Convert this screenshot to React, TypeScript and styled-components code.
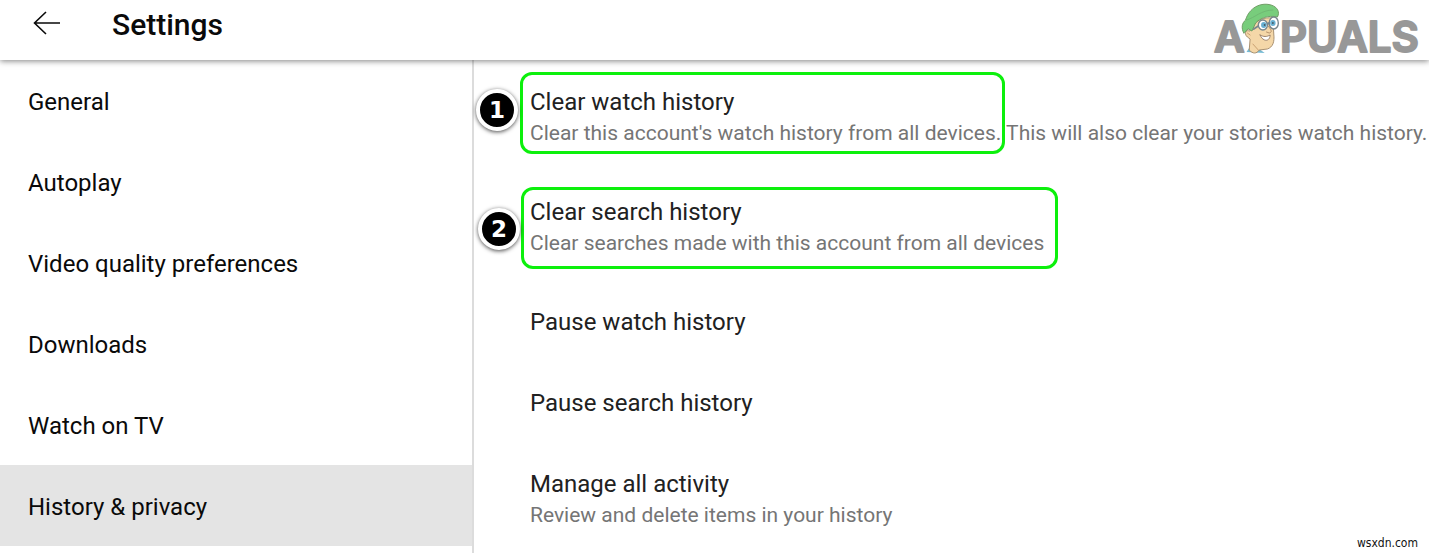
import React from "react";
import styled, { createGlobalStyle } from "styled-components";

const GlobalStyle = createGlobalStyle`
  *, *::before, *::after { box-sizing: border-box; }
  body {
    margin: 0;
    background: #fff;
    color: #0a0a0a;
    font-family: Roboto, "Liberation Sans", sans-serif;
  }
`;

const Page = styled.div`
  position: relative;
  display: flex;
  flex-direction: column;
  min-height: 100vh;
`;

const Header = styled.header`
  position: relative;
  z-index: 1;
  display: flex;
  align-items: center;
  height: 60px;
  padding: 0 4px 0 32px;
  background: #fff;
  box-shadow: 0 1px 6px rgba(0, 0, 0, 0.5);
`;

const BackButton = styled.button`
  display: flex;
  width: 80px;
  padding: 0 0 14px;
  border: 0;
  background: none;
  cursor: pointer;
`;

const Title = styled.h1`
  flex: 1;
  margin: 0;
  padding-bottom: 10px;
  font-size: 30px;
  line-height: 36px;
  font-weight: 500;
  color: #0a0a0a;
`;

const LogoMark = styled.svg`
  align-self: flex-start;
  flex: none;
  overflow: visible;
`;

const Body = styled.div`
  display: flex;
  flex: 1;
`;

const Sidebar = styled.nav`
  flex: 0 0 474px;
  border-right: 2px solid #dcdcdc;
`;

const NavItem = styled.a<{ $active?: boolean }>`
  display: flex;
  align-items: center;
  height: 81px;
  padding: 2px 28px 0;
  font-size: 24px;
  line-height: 32px;
  color: #0a0a0a;
  text-decoration: none;
  background: ${(p) => (p.$active ? "#e4e4e4" : "transparent")};
`;

const Content = styled.main`
  flex: 1;
  min-width: 0;
`;

const Row = styled.div`
  position: relative;
`;

const Option = styled.button<{ $single: boolean }>`
  display: block;
  width: 100%;
  padding: 26px 0 ${(p) => (p.$single ? 23 : 22)}px 56px;
  border: 0;
  background: none;
  font: inherit;
  text-align: left;
  cursor: pointer;
`;

const OptionTitle = styled.span`
  display: block;
  font-size: 24px;
  line-height: 32px;
  color: #212121;
`;

const OptionText = styled.span`
  display: block;
  font-size: 21px;
  line-height: 30px;
  color: #757575;
`;

const Highlight = styled.div<{ $left: number; $top: number; $width: number }>`
  position: absolute;
  left: ${(p) => p.$left}px;
  top: ${(p) => p.$top}px;
  width: ${(p) => p.$width}px;
  height: 82px;
  border: 3px solid #0cf00c;
  border-radius: 12px;
  pointer-events: none;
`;

const Badge = styled.div<{ $left: number; $top: number }>`
  position: absolute;
  left: ${(p) => p.$left}px;
  top: ${(p) => p.$top}px;
  display: flex;
  align-items: center;
  justify-content: center;
  width: 42px;
  height: 42px;
  border: 4px solid #fff;
  border-radius: 50%;
  background: #000;
  box-shadow: 0 1px 4px rgba(0, 0, 0, 0.7);
  color: #fff;
  font: bold 23px/32px "DejaVu Sans", sans-serif;
`;

const Watermark = styled.div`
  position: absolute;
  right: 11px;
  bottom: 2px;
  font: 12px/16px "DejaVu Sans Condensed", "DejaVu Sans", sans-serif;
  color: #111;
`;

const navItems = [
  "General",
  "Autoplay",
  "Video quality preferences",
  "Downloads",
  "Watch on TV",
  "History & privacy",
];

type Mark = { label: string; left: number; top: number; boxLeft: number; boxTop: number; boxWidth: number };

const options: { title: string; text?: string; mark?: Mark }[] = [
  {
    title: "Clear watch history",
    text: "Clear this account's watch history from all devices. This will also clear your stories watch history.",
    mark: { label: "1", left: 2, top: 29, boxLeft: 46, boxTop: 12, boxWidth: 485 },
  },
  {
    title: "Clear search history",
    text: "Clear searches made with this account from all devices",
    mark: { label: "2", left: 4, top: 38, boxLeft: 47, boxTop: 17, boxWidth: 537 },
  },
  { title: "Pause watch history" },
  { title: "Pause search history" },
  { title: "Manage all activity", text: "Review and delete items in your history" },
];

function Logo() {
  return (
    <LogoMark width="214" height="68" viewBox="0 0 214 68" role="img" aria-label="Appuals">
      <g
        fill="#989898"
        stroke="#989898"
        strokeWidth="2"
        strokeLinejoin="round"
        fontFamily="Inter, sans-serif"
        fontWeight="600"
        fontSize="42"
      >
        <text x="3" y="52">A</text>
        <text x="69" y="52">PUALS</text>
      </g>
      <g strokeLinejoin="round" strokeLinecap="round" transform="translate(10 0) scale(0.91 1)">
        <path d="M28 52 L31 48 L42 49 L48 53 Z" fill="#74b9d3" />
        <path
          d="M31 31 C27 29 25 34 29 37 L32 39 L31 50 C35 54 39 54 42 50 L51 49 C57 47 59 42 58 34 L57 18 C47 17 40 20 36 25 Z"
          fill="#f4d7a8"
          stroke="#a58d6d"
          strokeWidth="1"
        />
        <path
          d="M25 33 C22 28 23 23 27 20 C31 8 43 2 55 5 C62 7 65 12 62 17 C52 15 43 18 38 23 L34 31 L30 29 Z"
          fill="#78cd7c"
          stroke="#6c9a62"
          strokeWidth="1"
        />
        <path d="M28 20 C37 18 44 10 57 10" fill="none" stroke="#6fb872" strokeWidth="1" />
        <circle cx="46" cy="25" r="5" fill="#fff" stroke="#77868d" strokeWidth="1.5" />
        <ellipse cx="58" cy="23" rx="5" ry="6" fill="#fff" stroke="#77868d" strokeWidth="1.5" />
        <path d="M36 29 L41 26 M51 24 L53 23" stroke="#77868d" strokeWidth="2" />
        <circle cx="47" cy="25" r="3" fill="#67afd1" />
        <circle cx="57" cy="23" r="3" fill="#67afd1" />
        <circle cx="48" cy="25" r="1" fill="#445962" />
        <circle cx="57" cy="23" r="1" fill="#445962" />
        <path d="M52 26 C55 30 57 32 53 33 L50 32" fill="none" stroke="#b08c68" strokeWidth="1" />
        <path d="M43 35 C47 37 50 37 54 35 C54 39 51 41 48 40 C45 39 44 37 43 35 Z" fill="#fff" stroke="#967d69" strokeWidth="1" />
        <path d="M29 33 L32 35 M35 44 L41 50" fill="none" stroke="#c79e6f" strokeWidth="1" />
      </g>
    </LogoMark>
  );
}

export default function App() {
  return (
    <Page>
      <GlobalStyle />
      <Header>
        <BackButton type="button" aria-label="Back">
          <svg width="30" height="26" viewBox="0 0 30 26" fill="none" stroke="#0a0a0a" strokeWidth="1.6">
            <path d="M14 2 L2.5 13 L14 24 M2.5 13 H28" />
          </svg>
        </BackButton>
        <Title>Settings</Title>
        <Logo />
      </Header>
      <Body>
        <Sidebar aria-label="Settings sections">
          {navItems.map((item) => (
            <NavItem key={item} href="#" $active={item === "History & privacy"}>
              {item}
            </NavItem>
          ))}
        </Sidebar>
        <Content>
          {options.map(({ title, text, mark }) => (
            <Row key={title}>
              <Option type="button" $single={!text}>
                <OptionTitle>{title}</OptionTitle>
                {text && <OptionText>{text}</OptionText>}
              </Option>
              {mark && (
                <>
                  <Highlight $left={mark.boxLeft} $top={mark.boxTop} $width={mark.boxWidth} />
                  <Badge $left={mark.left} $top={mark.top}>{mark.label}</Badge>
                </>
              )}
            </Row>
          ))}
        </Content>
      </Body>
      <Watermark>wsxdn.com</Watermark>
    </Page>
  );
}
